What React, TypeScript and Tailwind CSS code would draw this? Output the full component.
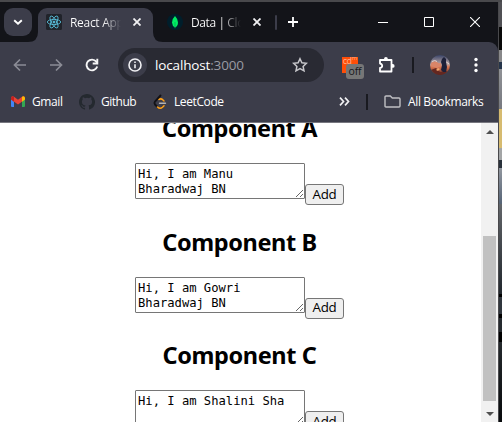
import React from "react";

const ui = "font-['Open_Sans','Noto_Sans',sans-serif]";

function CloseGlyph() {
  return (
    <svg width="8" height="8" viewBox="0 0 8 8" className="shrink-0" stroke="#f1f1f3" strokeWidth="1.800">
      <path d="M.5 .5 7.5 7.5M7.5 .5 .5 7.5" />
    </svg>
  );
}

function ReactLogo() {
  return (
    <svg width="16" height="16" viewBox="0 0 16 16" fill="none" stroke="#58bfdc" strokeWidth=".85" className="shrink-0">
      <rect width="16" height="16" rx="1.500" fill="#20232a" stroke="none" />
      <circle cx="8" cy="8" r="1" fill="#58bfdc" />
      <ellipse cx="8" cy="8" rx="6.700" ry="2.600" />
      <ellipse cx="8" cy="8" rx="6.700" ry="2.600" transform="rotate(60 8 8)" />
      <ellipse cx="8" cy="8" rx="6.700" ry="2.600" transform="rotate(120 8 8)" />
    </svg>
  );
}

function TabStrip() {
  return (
    <div className="flex h-10 items-center bg-[#131419]">
      <button className="ml-1 flex h-7 w-7 items-center justify-center rounded-[9px] bg-[#3c3d4a]">
        <svg width="10" height="10" viewBox="0 0 10 10" fill="none" stroke="#fff" strokeWidth="1.9">
          <path d="m1.2 3.2 3.8 3.6 3.8-3.6" />
        </svg>
      </button>
      <div className="relative ml-1.5 flex h-[34px] w-[115px] items-center self-end rounded-t-[9px] bg-[#3c3d4a] pl-2">
        <svg width="10" height="10" className="absolute -left-[10px] bottom-0" fill="#3c3d4a">
          <path d="M10 0v10H0Q10 10 10 0Z" />
        </svg>
        <svg width="10" height="10" className="absolute -right-[10px] bottom-0" fill="#3c3d4a">
          <path d="M0 0v10h10Q0 10 0 0Z" />
        </svg>
        <div className="-mt-[6px] flex items-center">
          <ReactLogo />
          <span className="ml-[8px] w-[51px] overflow-hidden whitespace-nowrap bg-linear-to-r from-white from-65% to-transparent bg-clip-text pt-px text-[12px] leading-4 tracking-[-0.300px] text-transparent">
            React App
          </span>
          <span className="ml-[12px]"><CloseGlyph /></span>
        </div>
      </div>
      <svg width="16" height="16" viewBox="0 0 16 16" className="ml-[14px] shrink-0">
        <circle cx="8" cy="8" r="8" fill="#001e2b" />
        <path d="M8 2Q4.800 5 5 8.500T8 13.500Q11 12 11 8.500T8 2Z" fill="#00ed64" />
        <path d="M8 8v6.300" stroke="#00a854" strokeWidth=".7" />
      </svg>
      <span className="ml-2 w-[50px] overflow-hidden whitespace-nowrap bg-linear-to-r from-white from-60% to-transparent bg-clip-text pt-px text-[12px] leading-4 tracking-[-0.400px] text-transparent">
        Data | Cloud
      </span>
      <span className="ml-[12px] flex"><CloseGlyph /></span>
      <div className="ml-[14px] h-[15px] w-[2px] rounded bg-[#3c3d4a]" />
      <svg width="10" height="10" className="ml-[11px]" stroke="#fff" strokeWidth="1.8">
        <path d="M5 0v10M0 5h10" />
      </svg>
      <div className="ml-auto mr-[18px] flex items-center gap-9">
        <svg width="10" height="10" stroke="#fff"><path d="M0 5.500h10" /></svg>
        <svg width="10" height="10" fill="none" stroke="#fff"><path d="M.5.5h9v9h-9Z" /></svg>
        <svg width="10" height="10" stroke="#fff" strokeWidth="1.100"><path d="m0 0 10 10M10 0 0 10" /></svg>
      </div>
    </div>
  );
}

function Avatar() {
  return (
    <svg width="20" height="20" viewBox="0 0 20 20" className="ml-4">
      <defs>
        <clipPath id="face"><circle cx="10" cy="10" r="10" /></clipPath>
        <linearGradient id="sky" x2="0" y2="1">
          <stop stopColor="#394468" />
          <stop offset=".45" stopColor="#b6a4a4" />
          <stop offset=".6" stopColor="#dc7650" />
          <stop offset="1" stopColor="#542520" />
        </linearGradient>
      </defs>
      <g clipPath="url(#face)">
        <path fill="url(#sky)" d="M0 0h20v20H0z" />
        <path d="M1 8q4-3 6-1t4 1v3l-4 2-6-2Z" fill="#d98568" />
        <path d="M2 6.500q3-2 5 0M14 8q3-2 5 1" stroke="#e5d3cf" fill="none" />
        <path d="m1 15 5-2 4 4 5-1 5 1v4H0z" fill="#632720" />
        <path d="m6 15 2-2 2 1-2 2Z" fill="#efa46c" />
        <path d="m12 4 2-2 2 2v3l1 5-1 5h-3l-2-2 1-5-1-3Z" fill="#1d2039" />
      </g>
    </svg>
  );
}

function Toolbar() {
  return (
    <div className="flex h-[46px] items-center pl-[13px]">
      <svg width="14" height="14" viewBox="0 0 14 14" fill="none" stroke="#8b8c96" strokeWidth="1.700">
        <path d="M13 7H2M7 1.500 1.500 7 7 12.500" />
      </svg>
      <svg width="14" height="14" viewBox="0 0 14 14" fill="none" stroke="#8b8c96" strokeWidth="1.700" className="ml-[22px]">
        <path d="M1 7h11M7 1.500 12.500 7 7 12.500" />
      </svg>
      <svg width="14" height="14" viewBox="0 0 14 14" fill="none" stroke="#f6f6f7" strokeWidth="1.900" className="ml-[22px]">
        <path d="M12.200 8.500A5.400 5.400 0 1 1 11.300 3.700L12.500 5" />
        <path d="M12.300 .8v4.700H7.700" />
      </svg>
      <div className="ml-[19px] flex h-[34px] w-[206px] items-center rounded-full bg-[#292a33] pl-[5px] pr-4">
        <div className="flex h-6 w-6 shrink-0 items-center justify-center rounded-full bg-[#3c3d4a]">
          <svg width="14" height="14" viewBox="0 0 14 14" fill="none" stroke="#f1f1f4" strokeWidth="1.600">
            <circle cx="7" cy="7" r="6" />
            <path d="M7 6.300v4M7 3.500v1.500" />
          </svg>
        </div>
        <span className="ml-2 text-[13.500px] leading-5 tracking-[-0.150px] text-white">
          localhost<span className="text-[#999aa3]">:3000</span>
        </span>
        <svg width="16" height="16" viewBox="0 0 16 16" className="ml-auto" fill="none" stroke="#c7c7cb" strokeWidth="1.500">
          <path d="m8 1.700 1.900 4.100 4.500.5-3.300 3.100.9 4.500L8 11.600l-4 2.300.9-4.500L1.600 6.300l4.500-.5Z" />
        </svg>
      </div>
      <div className="relative ml-[18px] h-4 w-4 bg-[#ff4e08]">
        <div className="flex h-[7px] items-start justify-center text-[#ffb08c]">
          <span className="text-[9px] leading-[7px] tracking-[-0.500px]">cd</span>
          <span className="text-[6px] leading-[3px]">m</span>
        </div>
        <span className="absolute left-1 top-[7px] flex h-[15px] w-[18px] items-center justify-center rounded-[3px] bg-[#767676] text-[10.500px] leading-none tracking-[-0.100px] text-[#17171b]">off</span>
      </div>
      <svg width="18" height="18" viewBox="0 0 18 18" className="-mt-px ml-5" fill="none" stroke="#fff" strokeWidth="1.800">
        <path d="M2 4h11.500v11.500H2v-3.500q2.200-.3 2.200-2.200T2 7.600Z" strokeLinejoin="round" />
        <path d="M6 3.500V3a1.900 1.900 0 0 1 3.800 0v.5Z" fill="#fff" stroke="none" />
        <path d="M14 8h.7a1.900 1.900 0 0 1 0 3.800H14Z" fill="#fff" stroke="none" />
      </svg>
      <div className="ml-4 h-4 w-[2px] bg-[#191a20]" />
      <Avatar />
      <svg width="4" height="16" viewBox="0 0 4 16" className="ml-6" fill="#fff">
        <circle cx="2" cy="2.500" r="1.700" /><circle cx="2" cy="8" r="1.700" /><circle cx="2" cy="13.500" r="1.700" />
      </svg>
    </div>
  );
}

function Bookmarks() {
  return (
    <div className="flex h-[34px] items-center pb-[7px] pl-[11px] text-[12px] leading-4 text-white">
      <svg width="14" height="11" viewBox="0 0 14 11">
        <path d="M0 2h3v9H1q-1 0-1-1Z" fill="#4285f4" />
        <path d="M11 2h3v8q0 1-1 1h-2Z" fill="#34a853" />
        <path d="M0 2Q.5-.5 3 .8l4 3 4-3Q13.500-.5 14 2v1.500L7 8.500 0 3.500Z" fill="#ea4335" />
        <path d="M0 2Q.5-.5 3 .8v4.900L0 3.500Z" fill="#c5221f" />
        <path d="M14 2Q13.500-.5 11 .8v4.900l3-2.200Z" fill="#fbbc04" />
      </svg>
      <span className="ml-[7px] w-[32px] tracking-[-0.400px]">Gmail</span>
      <svg width="16" height="16" viewBox="0 0 16 16" className="ml-[15px]" fill="#24292f">
        <path d="M8 0C3.580 0 0 3.580 0 8c0 3.540 2.290 6.530 5.470 7.590.4.070.55-.17.55-.38v-1.490c-2.230.48-2.700-.95-2.700-.95-.36-.92-.89-1.170-.89-1.170-.72-.5.060-.49.060-.49.8.06 1.230.83 1.230.83.72 1.210 1.870.87 2.330.66.070-.52.280-.87.5-1.070-1.780-.2-3.640-.89-3.640-3.950 0-.87.310-1.590.82-2.150-.08-.2-.36-1.020.08-2.120 0 0 .67-.21 2.200.82a7.500 7.500 0 0 1 4 0c1.530-1.040 2.200-.82 2.200-.82.44 1.100.16 1.920.08 2.120.51.56.82 1.270.82 2.150 0 3.070-1.870 3.750-3.650 3.950.29.25.54.73.54 1.480v2.200c0 .21.150.46.55.38A8 8 0 0 0 8 0Z" />
      </svg>
      <span className="ml-[6px] w-[38px] tracking-[-0.500px]">Github</span>
      <svg width="14" height="16" viewBox="0 0 14 16" className="ml-[14px] overflow-visible" fill="none" strokeWidth="1.900" strokeLinecap="round">
        <path d="M7.500 1.500 2 7.500q-1.200 1.500 0 3l2 2" stroke="#121217" />
        <path d="M6 5.500q2-1.500 4 .5l1 1M4.500 13q2.500 2.500 5 .3l1.500-1.500" stroke="#ffa116" strokeWidth="1.500" />
        <path d="M6.500 9.300H12.500" stroke="#b3b3b3" strokeWidth="1.400" />
      </svg>
      <span className="ml-[7px] w-[51px] tracking-[-0.400px]">LeetCode</span>
      <svg width="11" height="9" viewBox="0 0 11 9" className="ml-auto" fill="none" stroke="#f1f1f3" strokeWidth="1.700">
        <path d="m1 .7 3.500 3.800L1 8.300M6 .7l3.500 3.800L6 8.300" />
      </svg>
      <div className="ml-4 h-4 w-[2px] bg-[#191a20]" />
      <svg width="17" height="13" viewBox="0 0 17 13" className="ml-4 mr-[7px]" fill="none" stroke="#c0c0c4" strokeWidth="1.400">
        <path d="M2 1h4.300l2 2H15q1 0 1 1v7q0 1-1 1H2q-1 0-1-1V2q0-1 1-1Z" />
      </svg>
      <span className="mr-[14px] w-[76px] whitespace-nowrap tracking-[-0.360px]">All Bookmarks</span>
    </div>
  );
}

function Entry({ name, text }: { name: string; text: string }) {
  return (
    <section className="h-[113.500px] shrink-0">
      <h2 className="flex h-8 w-full justify-center whitespace-nowrap font-['Noto_Sans',sans-serif] text-[23.500px] font-bold leading-[30px] tracking-[-0.400px] text-black">
        Component {name}
      </h2>
      <div className="mt-[18px] flex justify-center">
        <textarea
          defaultValue={text}
          spellCheck={false}
          className="h-9 w-[170px] resize overflow-hidden rounded-[1px] border border-[#767676] bg-white px-[2px] pb-[2px] pt-[3px] font-['DejaVu_Sans_Mono',monospace] text-[12.170px] leading-[15px] text-black"
        />
        <button className="mt-[21px] flex h-[21px] w-[39px] items-center justify-center rounded-[3px] border border-[#767676] bg-[#efefef] text-[13.333px] leading-none tracking-[-0.200px] text-black">
          Add
        </button>
      </div>
    </section>
  );
}

function Page() {
  return (
    <div className="flex h-[300px] border-t border-[#77777f] bg-white">
      <main className="w-[481px] overflow-hidden pr-[2px]">
        <div className="-mt-[10px] flex flex-col">
          <Entry name="A" text={"Hi, I am Manu\nBharadwaj BN"} />
          <Entry name="B" text={"Hi, I am Gowri\nBharadwaj BN"} />
          <Entry name="C" text="Hi, I am Shalini Sha" />
        </div>
      </main>
      <div className="flex w-[17px] flex-col items-center bg-[#f1f1f1] pt-[7px]">
        <svg width="8" height="4" fill="#505050"><path d="m4 0 4 4H0Z" /></svg>
        <div className="mt-[102px] h-[165px] w-[13px] bg-[#c1c1c1]" />
        <svg width="8" height="4" className="mt-[11px]" fill="#505050"><path d="M0 0h8L4 4Z" /></svg>
      </div>
    </div>
  );
}

function DesktopEdge() {
  return (
    <div className="flex w-1 flex-col border-l border-[#49494c]">
      <div className="h-[25px] bg-[#505054]" />
      <div className="h-[23px] bg-[#090909]" />
      <div className="h-[12px] bg-[#88888a]" />
      <div className="h-[7px] bg-[#25354b]" />
      <div className="h-[40px] bg-linear-to-b from-[#909296] to-[#777980]" />
      <div className="h-[39px] bg-[#d6bb70]" />
      <div className="h-[12px] bg-[#a3a5a6]" />
      <div className="h-[8px] bg-[#29313b]" />
      <div className="h-[36px] bg-linear-to-b from-[#92979f] to-[#566476]" />
      <div className="h-[90px] bg-linear-to-b from-[#63666a] to-[#22282e]" />
      <div className="h-[3px] bg-black" />
      <div className="h-[17px] bg-[#30363d]" />
      <div className="h-[4px] bg-black" />
      <div className="h-[14px] bg-[#252a2f]" />
      <div className="h-[10px] bg-black" />
      <div className="flex-1 bg-linear-to-b from-[#252a2d] to-[#080a0c]" />
    </div>
  );
}

export default function App() {
  return (
    <div className={`h-[422px] w-[502px] overflow-hidden bg-[#49494c] pt-[2px] ${ui}`}>
      <div className="flex h-[420px]">
        <div className="w-[498px] shrink-0 bg-[#131419]">
          <TabStrip />
          <div className="h-[80px] rounded-tr-[9px] bg-[#3c3d4a]">
            <Toolbar />
            <Bookmarks />
          </div>
          <Page />
        </div>
        <DesktopEdge />
      </div>
    </div>
  );
}
